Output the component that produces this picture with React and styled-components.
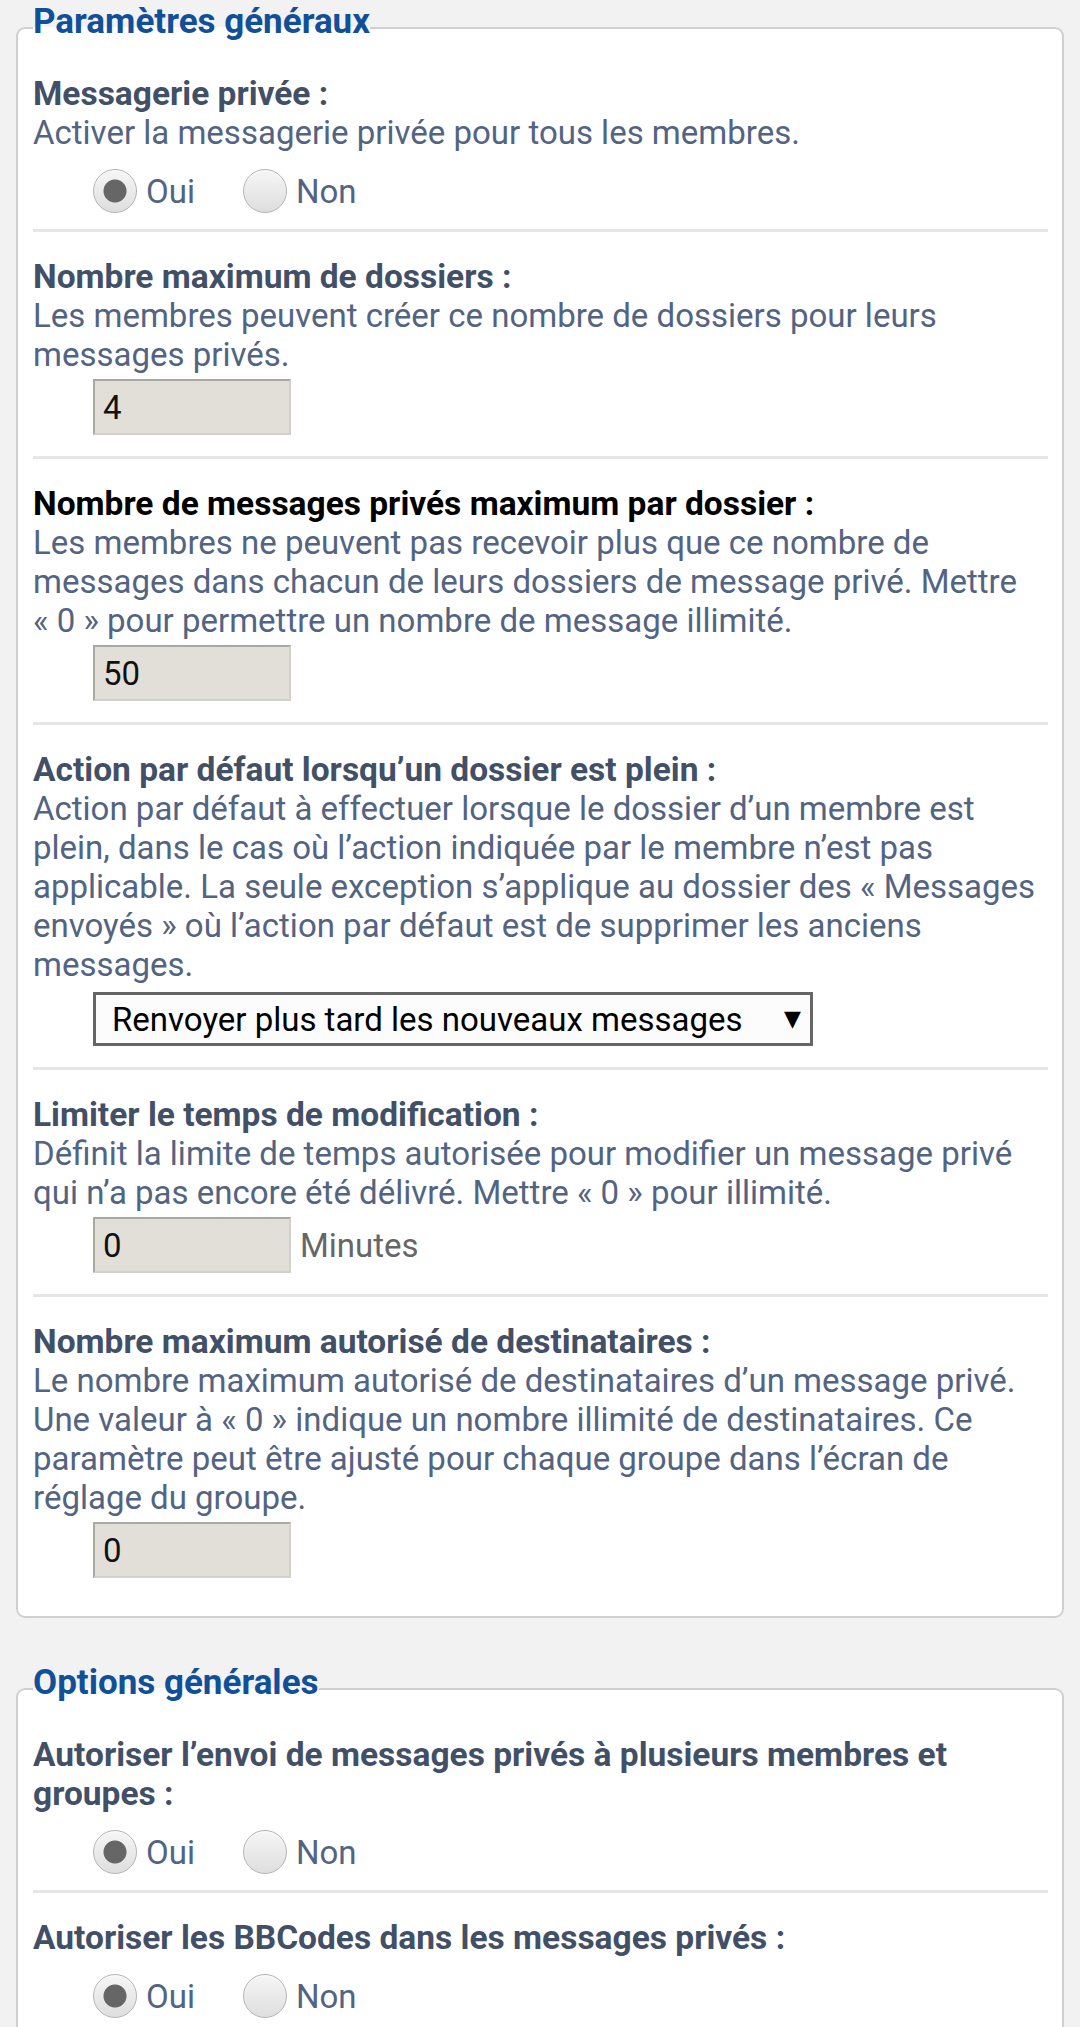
import React from "react";
import styled, { createGlobalStyle } from "styled-components";

const GlobalStyle = createGlobalStyle`
  html, body {
    margin: 0;
    padding: 0;
    background: #f2f2f2;
  }
  body {
    font-family: Roboto, "Liberation Sans", Arial, sans-serif;
    font-size: 33px;
    line-height: 39px;
    color: #536482;
  }
`;

const Page = styled.div`
  padding: 4px 16px 40px;
`;

const Fieldset = styled.fieldset`
  margin: 0 0 47px;
  padding: 0 14px 17px 15px;
  min-width: 0;
  background: #fff;
  border: 2px solid #d0d0d0;
  border-radius: 9px;
`;

const Legend = styled.legend`
  padding: 0 0 12px;
  font-size: 35px;
  line-height: 35px;
  font-weight: 700;
  color: #115098;
`;

const Row = styled.div`
  padding: 25px 0 ${(p) => (p.$tight ? "16px" : "21px")};
  border-bottom: 3px solid #e6e6e6;
  &:first-of-type {
    padding-top: 23px;
  }
  &:last-child {
    border-bottom: none;
  }
`;

const Label = styled.div`
  font-size: 33.5px;
  font-weight: 700;
  color: ${(p) => (p.$active ? "#000" : "#425067")};
`;

const Explain = styled.div`
  color: #536482;
`;

const Control = styled.div`
  display: flex;
  align-items: center;
  gap: 9px;
  margin: ${(p) => p.$top || "5px"} 0 0 60px;
`;

const RadioOption = styled.label`
  display: flex;
  align-items: center;
  gap: 9px;
  margin-right: 39px;
  color: #536482;
`;

const Radio = styled.input.attrs({ type: "radio" })`
  appearance: none;
  margin: 0;
  width: 44px;
  height: 44px;
  border-radius: 50%;
  border: 1.5px solid #b4b4b4;
  background: linear-gradient(#f6f6f6, #dedede);
  box-shadow: inset 0 1px 1px rgba(255, 255, 255, 0.8);
  &:checked {
    background: radial-gradient(circle, #666 0 11px, transparent 12px),
      linear-gradient(#f6f6f6, #dedede);
  }
`;

const TextInput = styled.input`
  box-sizing: border-box;
  width: 198px;
  height: 56px;
  margin: 0;
  padding: 0 8px;
  font: inherit;
  color: #111;
  background: #e2dfd9;
  border: 2px solid;
  border-color: #aaa8a2 #d3d1cb #d3d1cb #aaa8a2;
  outline: none;
`;

const Unit = styled.span`
  color: #666;
`;

const SelectWrap = styled.div`
  position: relative;
  width: 720px;
`;

const Select = styled.select`
  box-sizing: border-box;
  appearance: none;
  width: 100%;
  height: 54px;
  margin: 0;
  padding: 0 50px 0 16px;
  font: inherit;
  color: #000;
  background: #fcfcfc;
  border: 3px solid #666;
  border-radius: 0;
`;

const Arrow = styled.span`
  position: absolute;
  right: 12px;
  top: 50%;
  transform: translateY(-50%);
  font-family: "DejaVu Sans", sans-serif;
  font-size: 22px;
  line-height: 1;
  color: #000;
  pointer-events: none;
`;

const YesNo = ({ name }) => (
  <Control $top="17px">
    <RadioOption>
      <Radio name={name} defaultChecked />
      Oui
    </RadioOption>
    <RadioOption>
      <Radio name={name} />
      Non
    </RadioOption>
  </Control>
);

export default function App() {
  return (
    <Page>
      <GlobalStyle />
      <Fieldset>
        <Legend>Paramètres généraux</Legend>
        <Row $tight>
          <Label>Messagerie privée :</Label>
          <Explain>Activer la messagerie privée pour tous les membres.</Explain>
          <YesNo name="allow_privmsg" />
        </Row>
        <Row>
          <Label>Nombre maximum de dossiers :</Label>
          <Explain>
            Les membres peuvent créer ce nombre de dossiers pour leurs messages
            privés.
          </Explain>
          <Control>
            <TextInput defaultValue="4" />
          </Control>
        </Row>
        <Row>
          <Label $active>Nombre de messages privés maximum par dossier :</Label>
          <Explain>
            Les membres ne peuvent pas recevoir plus que ce nombre de messages
            dans chacun de leurs dossiers de message privé. Mettre «&nbsp;0&nbsp;»
            pour permettre un nombre de message illimité.
          </Explain>
          <Control>
            <TextInput defaultValue="50" />
          </Control>
        </Row>
        <Row>
          <Label>Action par défaut lorsqu’un dossier est plein :</Label>
          <Explain>
            Action par défaut à effectuer lorsque le dossier d’un membre est
            plein, dans le cas où l’action indiquée par le membre n’est pas
            applicable. La seule exception s’applique au dossier des
            «&nbsp;Messages envoyés&nbsp;» où l’action par défaut est de
            supprimer les anciens messages.
          </Explain>
          <Control $top="8px">
            <SelectWrap>
              <Select defaultValue="hold">
                <option value="hold">Renvoyer plus tard les nouveaux messages</option>
                <option value="delete">Supprimer les anciens messages</option>
              </Select>
              <Arrow>▼</Arrow>
            </SelectWrap>
          </Control>
        </Row>
        <Row>
          <Label>Limiter le temps de modification :</Label>
          <Explain>
            Définit la limite de temps autorisée pour modifier un message privé
            qui n’a pas encore été délivré. Mettre «&nbsp;0&nbsp;» pour illimité.
          </Explain>
          <Control>
            <TextInput defaultValue="0" />
            <Unit>Minutes</Unit>
          </Control>
        </Row>
        <Row>
          <Label>Nombre maximum autorisé de destinataires :</Label>
          <Explain>
            Le nombre maximum autorisé de destinataires d’un message privé. Une
            valeur à «&nbsp;0&nbsp;» indique un nombre illimité de destinataires.
            Ce paramètre peut être ajusté pour chaque groupe dans l’écran de
            réglage du groupe.
          </Explain>
          <Control>
            <TextInput defaultValue="0" />
          </Control>
        </Row>
      </Fieldset>

      <Fieldset>
        <Legend>Options générales</Legend>
        <Row $tight>
          <Label>Autoriser l’envoi de messages privés à plusieurs membres et groupes :</Label>
          <YesNo name="allow_mass_pm" />
        </Row>
        <Row $tight>
          <Label>Autoriser les BBCodes dans les messages privés :</Label>
          <YesNo name="auth_bbcode_pm" />
        </Row>
        <Row $tight>
          <Label>Autoriser les smileys dans les messages privés :</Label>
          <YesNo name="auth_smilies_pm" />
        </Row>
      </Fieldset>
    </Page>
  );
}
